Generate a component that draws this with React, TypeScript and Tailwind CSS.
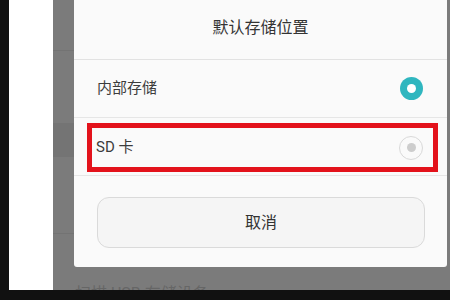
export default function App() {
  const font = { fontFamily: 'Roboto, "Noto Sans CJK SC", sans-serif' };
  return (
    <div className="w-[450px] h-[300px] overflow-hidden bg-[#111111] flex flex-col" style={font}>
      <div className="h-[290px] flex">
        <div className="w-[9px] bg-[#111111]" />
        <div className="w-[44px] bg-white" />
        {/* dimmed page behind the dialog */}
        <div className="flex-1 bg-[#7b7b7b] flex flex-col">
          <div className="h-[267px] flex">
            <div className="w-[21px] flex flex-col">
              <div className="h-[50px]" />
              <div className="h-[1px] bg-[#737373]" />
              <div className="h-[72px]" />
              <div className="h-[34px] bg-[#747474]" />
              <div className="h-[76px]" />
              <div className="h-[1px] bg-[#737373]" />
            </div>
            {/* dialog */}
            <div className="w-[373px] bg-[#fafafa] rounded-b-[3px] flex flex-col">
              <div className="h-[59px] flex items-center justify-center pb-[4px] text-[16px] text-[#333333]">
                默认存储位置
              </div>
              <div className="h-px bg-[#e2e2e2]" />
              <div className="h-[57px] flex items-center justify-between pl-[23px] pr-[24px]">
                <span className="text-[15px] text-[#3c3c3c]">内部存储</span>
                <div className="w-[23px] h-[23px] rounded-full bg-[#2fb6bf] flex items-center justify-center">
                  <div className="w-[9px] h-[9px] rounded-full bg-white" />
                </div>
              </div>
              <div className="h-px bg-[#e6e6e6]" />
              <div className="h-[57px] pl-[13px] pr-[9px] pt-[5px] pb-[3px] flex">
                <div className="flex-1 border-[5px] border-[#e3121b] flex items-center justify-between pl-[4px] pr-[10px]">
                  <span className="text-[15px] text-[#3c3c3c]">SD 卡</span>
                  <div className="w-[24px] h-[24px] rounded-full border-[1.5px] border-[#d9d9d9] flex items-center justify-center">
                    <div className="w-[9px] h-[9px] rounded-full bg-[#cdcdcd]" />
                  </div>
                </div>
              </div>
              <div className="h-px bg-[#e6e6e6]" />
              <div className="flex-1 pl-[23px] pr-[22px] pt-[21px] pb-[19px] flex">
                <div className="flex-1 rounded-[12px] border border-[#dadada] bg-[#f5f5f5] flex items-center justify-center text-[16px] text-[#333333]">
                  取消
                </div>
              </div>
            </div>
            <div className="flex-1" />
          </div>
          <div className="h-[23px] overflow-hidden pl-[22px] pt-[17px]">
            <div className="text-[16px] leading-[20px] text-[#666666] whitespace-nowrap">扫描 USB 存储设备</div>
          </div>
        </div>
      </div>
      <div className="h-[10px] bg-[#111111]" />
    </div>
  );
}
